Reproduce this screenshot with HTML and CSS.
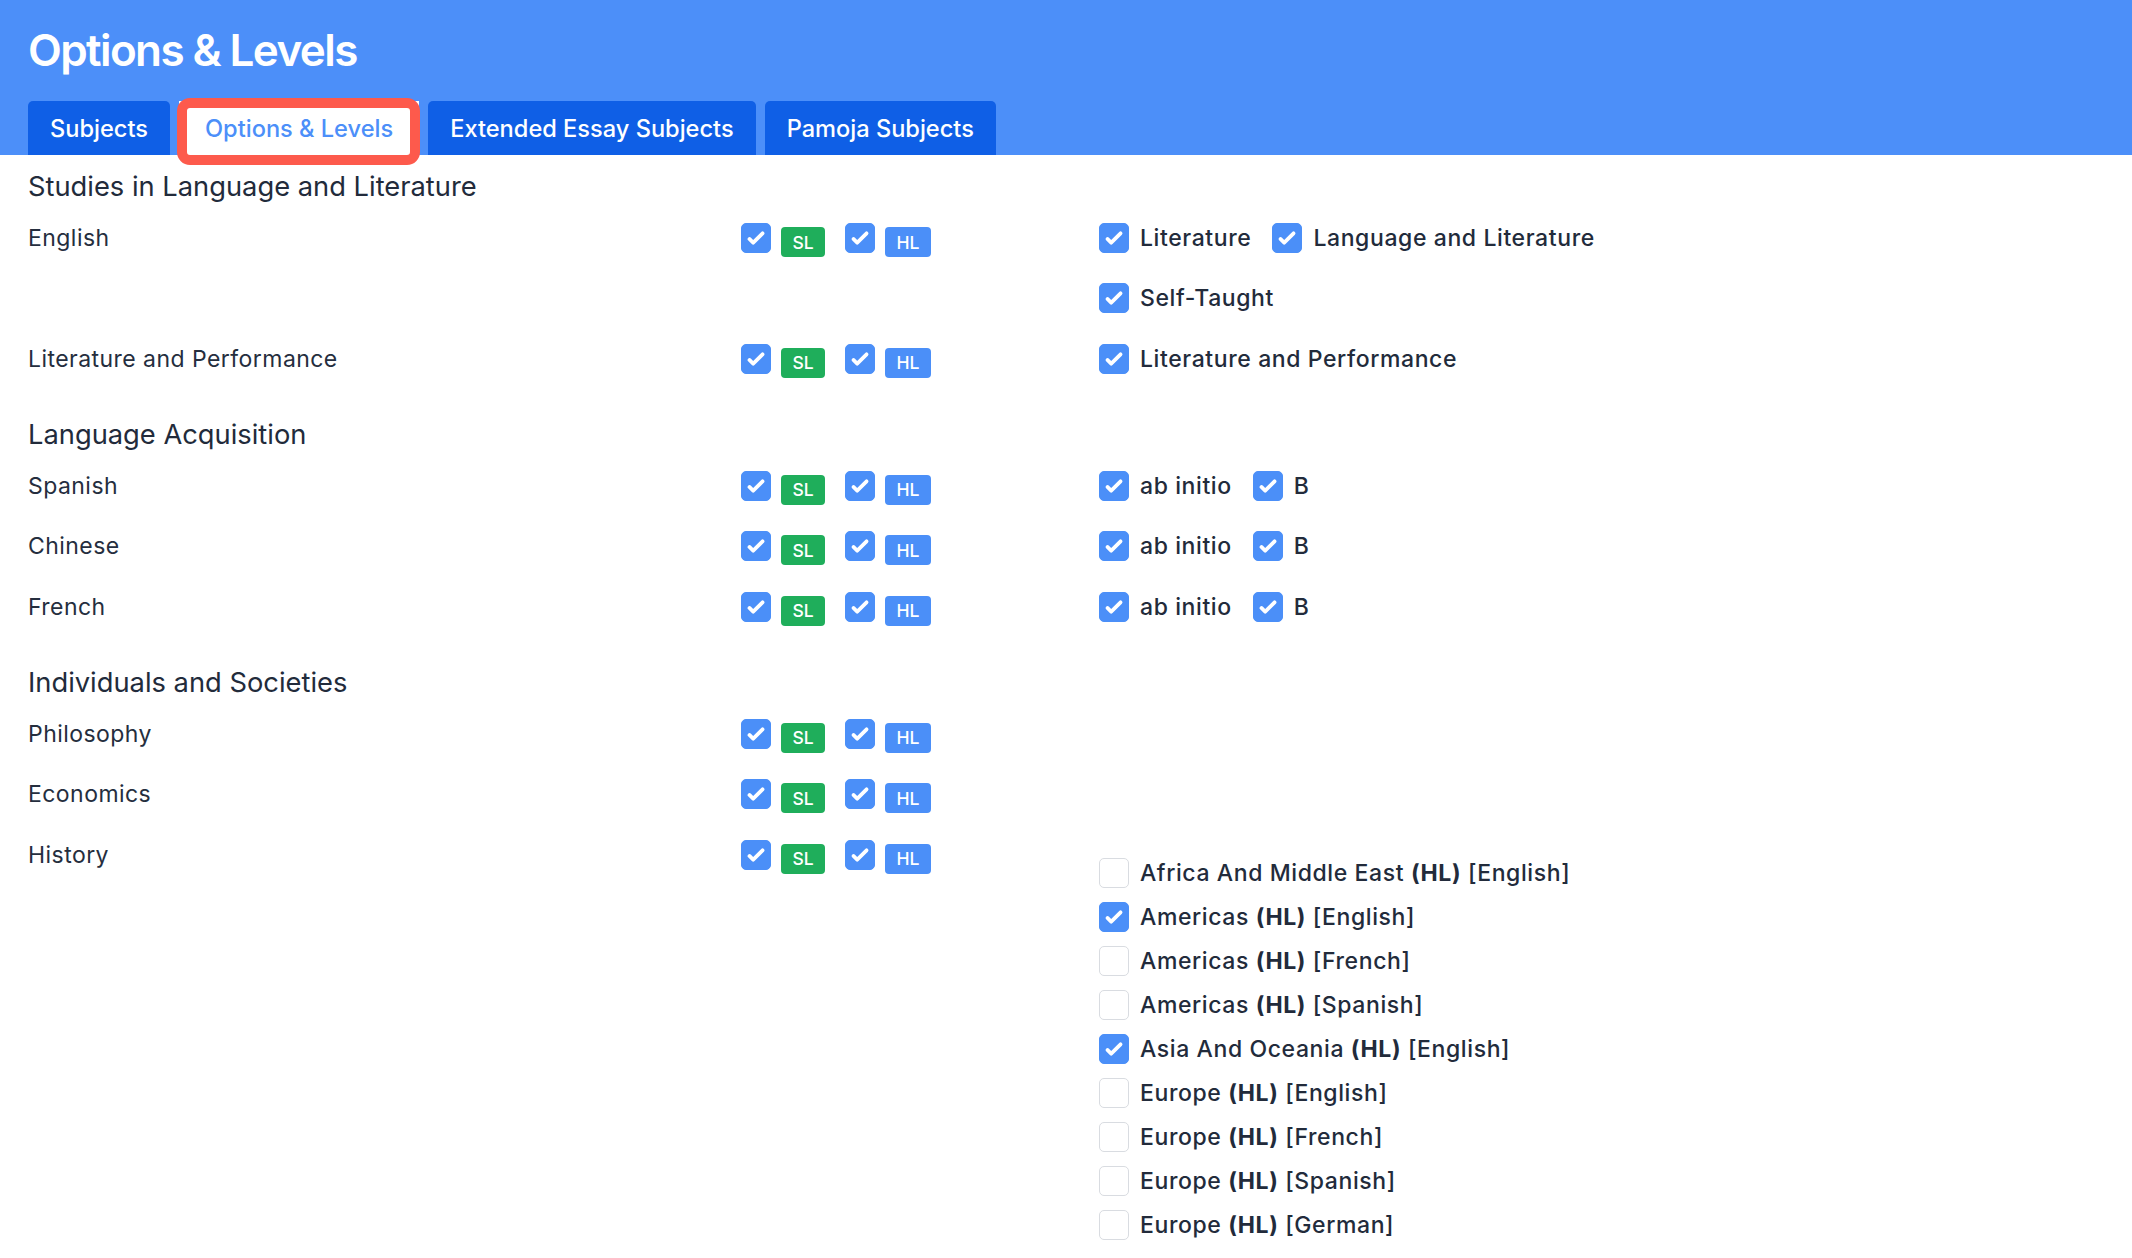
FILE: index.html
```html
<!DOCTYPE html>
<html lang="en">
<head>
<meta charset="utf-8">
<title>Options &amp; Levels</title>
<link rel="stylesheet" href="styles.css">
</head>
<body>
<header class="header">
  <h1 class="title">Options &amp; Levels</h1>
  <nav class="tabs">
    <a class="tab">Subjects</a>
    <a class="tab active">Options &amp; Levels</a>
    <a class="tab">Extended Essay Subjects</a>
    <a class="tab">Pamoja Subjects</a>
  </nav>
</header>

<main class="content">
  <section class="group">
    <h2 class="group-title">Studies in Language and Literature</h2>
    <div class="row">
      <div class="name">English</div>
      <div class="levels">
        <span class="cb on"><svg viewBox="0 0 16 16"><path d="M12.207 4.793a1 1 0 010 1.414l-5 5a1 1 0 01-1.414 0l-2-2a1 1 0 011.414-1.414L6.5 9.086l4.293-4.293a1 1 0 011.414 0z"/></svg></span>
        <span class="badge sl">SL</span>
        <span class="cb on"><svg viewBox="0 0 16 16"><path d="M12.207 4.793a1 1 0 010 1.414l-5 5a1 1 0 01-1.414 0l-2-2a1 1 0 011.414-1.414L6.5 9.086l4.293-4.293a1 1 0 011.414 0z"/></svg></span>
        <span class="badge hl">HL</span>
      </div>
      <div class="options wrap">
        <label class="opt"><span class="cb on"><svg viewBox="0 0 16 16"><path d="M12.207 4.793a1 1 0 010 1.414l-5 5a1 1 0 01-1.414 0l-2-2a1 1 0 011.414-1.414L6.5 9.086l4.293-4.293a1 1 0 011.414 0z"/></svg></span>Literature</label>
        <label class="opt"><span class="cb on"><svg viewBox="0 0 16 16"><path d="M12.207 4.793a1 1 0 010 1.414l-5 5a1 1 0 01-1.414 0l-2-2a1 1 0 011.414-1.414L6.5 9.086l4.293-4.293a1 1 0 011.414 0z"/></svg></span>Language and Literature</label>
        <label class="opt"><span class="cb on"><svg viewBox="0 0 16 16"><path d="M12.207 4.793a1 1 0 010 1.414l-5 5a1 1 0 01-1.414 0l-2-2a1 1 0 011.414-1.414L6.5 9.086l4.293-4.293a1 1 0 011.414 0z"/></svg></span>Self-Taught</label>
      </div>
    </div>
    <div class="row">
      <div class="name">Literature and Performance</div>
      <div class="levels">
        <span class="cb on"><svg viewBox="0 0 16 16"><path d="M12.207 4.793a1 1 0 010 1.414l-5 5a1 1 0 01-1.414 0l-2-2a1 1 0 011.414-1.414L6.5 9.086l4.293-4.293a1 1 0 011.414 0z"/></svg></span>
        <span class="badge sl">SL</span>
        <span class="cb on"><svg viewBox="0 0 16 16"><path d="M12.207 4.793a1 1 0 010 1.414l-5 5a1 1 0 01-1.414 0l-2-2a1 1 0 011.414-1.414L6.5 9.086l4.293-4.293a1 1 0 011.414 0z"/></svg></span>
        <span class="badge hl">HL</span>
      </div>
      <div class="options wrap">
        <label class="opt"><span class="cb on"><svg viewBox="0 0 16 16"><path d="M12.207 4.793a1 1 0 010 1.414l-5 5a1 1 0 01-1.414 0l-2-2a1 1 0 011.414-1.414L6.5 9.086l4.293-4.293a1 1 0 011.414 0z"/></svg></span>Literature and Performance</label>
      </div>
    </div>
  </section>

  <section class="group">
    <h2 class="group-title">Language Acquisition</h2>
    <div class="row">
      <div class="name">Spanish</div>
      <div class="levels">
        <span class="cb on"><svg viewBox="0 0 16 16"><path d="M12.207 4.793a1 1 0 010 1.414l-5 5a1 1 0 01-1.414 0l-2-2a1 1 0 011.414-1.414L6.5 9.086l4.293-4.293a1 1 0 011.414 0z"/></svg></span>
        <span class="badge sl">SL</span>
        <span class="cb on"><svg viewBox="0 0 16 16"><path d="M12.207 4.793a1 1 0 010 1.414l-5 5a1 1 0 01-1.414 0l-2-2a1 1 0 011.414-1.414L6.5 9.086l4.293-4.293a1 1 0 011.414 0z"/></svg></span>
        <span class="badge hl">HL</span>
      </div>
      <div class="options wrap">
        <label class="opt"><span class="cb on"><svg viewBox="0 0 16 16"><path d="M12.207 4.793a1 1 0 010 1.414l-5 5a1 1 0 01-1.414 0l-2-2a1 1 0 011.414-1.414L6.5 9.086l4.293-4.293a1 1 0 011.414 0z"/></svg></span>ab initio</label>
        <label class="opt"><span class="cb on"><svg viewBox="0 0 16 16"><path d="M12.207 4.793a1 1 0 010 1.414l-5 5a1 1 0 01-1.414 0l-2-2a1 1 0 011.414-1.414L6.5 9.086l4.293-4.293a1 1 0 011.414 0z"/></svg></span>B</label>
      </div>
    </div>
    <div class="row">
      <div class="name">Chinese</div>
      <div class="levels">
        <span class="cb on"><svg viewBox="0 0 16 16"><path d="M12.207 4.793a1 1 0 010 1.414l-5 5a1 1 0 01-1.414 0l-2-2a1 1 0 011.414-1.414L6.5 9.086l4.293-4.293a1 1 0 011.414 0z"/></svg></span>
        <span class="badge sl">SL</span>
        <span class="cb on"><svg viewBox="0 0 16 16"><path d="M12.207 4.793a1 1 0 010 1.414l-5 5a1 1 0 01-1.414 0l-2-2a1 1 0 011.414-1.414L6.5 9.086l4.293-4.293a1 1 0 011.414 0z"/></svg></span>
        <span class="badge hl">HL</span>
      </div>
      <div class="options wrap">
        <label class="opt"><span class="cb on"><svg viewBox="0 0 16 16"><path d="M12.207 4.793a1 1 0 010 1.414l-5 5a1 1 0 01-1.414 0l-2-2a1 1 0 011.414-1.414L6.5 9.086l4.293-4.293a1 1 0 011.414 0z"/></svg></span>ab initio</label>
        <label class="opt"><span class="cb on"><svg viewBox="0 0 16 16"><path d="M12.207 4.793a1 1 0 010 1.414l-5 5a1 1 0 01-1.414 0l-2-2a1 1 0 011.414-1.414L6.5 9.086l4.293-4.293a1 1 0 011.414 0z"/></svg></span>B</label>
      </div>
    </div>
    <div class="row">
      <div class="name">French</div>
      <div class="levels">
        <span class="cb on"><svg viewBox="0 0 16 16"><path d="M12.207 4.793a1 1 0 010 1.414l-5 5a1 1 0 01-1.414 0l-2-2a1 1 0 011.414-1.414L6.5 9.086l4.293-4.293a1 1 0 011.414 0z"/></svg></span>
        <span class="badge sl">SL</span>
        <span class="cb on"><svg viewBox="0 0 16 16"><path d="M12.207 4.793a1 1 0 010 1.414l-5 5a1 1 0 01-1.414 0l-2-2a1 1 0 011.414-1.414L6.5 9.086l4.293-4.293a1 1 0 011.414 0z"/></svg></span>
        <span class="badge hl">HL</span>
      </div>
      <div class="options wrap">
        <label class="opt"><span class="cb on"><svg viewBox="0 0 16 16"><path d="M12.207 4.793a1 1 0 010 1.414l-5 5a1 1 0 01-1.414 0l-2-2a1 1 0 011.414-1.414L6.5 9.086l4.293-4.293a1 1 0 011.414 0z"/></svg></span>ab initio</label>
        <label class="opt"><span class="cb on"><svg viewBox="0 0 16 16"><path d="M12.207 4.793a1 1 0 010 1.414l-5 5a1 1 0 01-1.414 0l-2-2a1 1 0 011.414-1.414L6.5 9.086l4.293-4.293a1 1 0 011.414 0z"/></svg></span>B</label>
      </div>
    </div>
  </section>

  <section class="group">
    <h2 class="group-title">Individuals and Societies</h2>
    <div class="row">
      <div class="name">Philosophy</div>
      <div class="levels">
        <span class="cb on"><svg viewBox="0 0 16 16"><path d="M12.207 4.793a1 1 0 010 1.414l-5 5a1 1 0 01-1.414 0l-2-2a1 1 0 011.414-1.414L6.5 9.086l4.293-4.293a1 1 0 011.414 0z"/></svg></span>
        <span class="badge sl">SL</span>
        <span class="cb on"><svg viewBox="0 0 16 16"><path d="M12.207 4.793a1 1 0 010 1.414l-5 5a1 1 0 01-1.414 0l-2-2a1 1 0 011.414-1.414L6.5 9.086l4.293-4.293a1 1 0 011.414 0z"/></svg></span>
        <span class="badge hl">HL</span>
      </div>
      <div class="options"></div>
    </div>
    <div class="row">
      <div class="name">Economics</div>
      <div class="levels">
        <span class="cb on"><svg viewBox="0 0 16 16"><path d="M12.207 4.793a1 1 0 010 1.414l-5 5a1 1 0 01-1.414 0l-2-2a1 1 0 011.414-1.414L6.5 9.086l4.293-4.293a1 1 0 011.414 0z"/></svg></span>
        <span class="badge sl">SL</span>
        <span class="cb on"><svg viewBox="0 0 16 16"><path d="M12.207 4.793a1 1 0 010 1.414l-5 5a1 1 0 01-1.414 0l-2-2a1 1 0 011.414-1.414L6.5 9.086l4.293-4.293a1 1 0 011.414 0z"/></svg></span>
        <span class="badge hl">HL</span>
      </div>
      <div class="options"></div>
    </div>
    <div class="row">
      <div class="name">History</div>
      <div class="levels">
        <span class="cb on"><svg viewBox="0 0 16 16"><path d="M12.207 4.793a1 1 0 010 1.414l-5 5a1 1 0 01-1.414 0l-2-2a1 1 0 011.414-1.414L6.5 9.086l4.293-4.293a1 1 0 011.414 0z"/></svg></span>
        <span class="badge sl">SL</span>
        <span class="cb on"><svg viewBox="0 0 16 16"><path d="M12.207 4.793a1 1 0 010 1.414l-5 5a1 1 0 01-1.414 0l-2-2a1 1 0 011.414-1.414L6.5 9.086l4.293-4.293a1 1 0 011.414 0z"/></svg></span>
        <span class="badge hl">HL</span>
      </div>
      <div class="options list">
        <label class="opt"><span class="cb"></span>Africa And Middle East&nbsp;<b>(HL)</b>&nbsp;[English]</label>
        <label class="opt"><span class="cb on"><svg viewBox="0 0 16 16"><path d="M12.207 4.793a1 1 0 010 1.414l-5 5a1 1 0 01-1.414 0l-2-2a1 1 0 011.414-1.414L6.5 9.086l4.293-4.293a1 1 0 011.414 0z"/></svg></span>Americas&nbsp;<b>(HL)</b>&nbsp;[English]</label>
        <label class="opt"><span class="cb"></span>Americas&nbsp;<b>(HL)</b>&nbsp;[French]</label>
        <label class="opt"><span class="cb"></span>Americas&nbsp;<b>(HL)</b>&nbsp;[Spanish]</label>
        <label class="opt"><span class="cb on"><svg viewBox="0 0 16 16"><path d="M12.207 4.793a1 1 0 010 1.414l-5 5a1 1 0 01-1.414 0l-2-2a1 1 0 011.414-1.414L6.5 9.086l4.293-4.293a1 1 0 011.414 0z"/></svg></span>Asia And Oceania&nbsp;<b>(HL)</b>&nbsp;[English]</label>
        <label class="opt"><span class="cb"></span>Europe&nbsp;<b>(HL)</b>&nbsp;[English]</label>
        <label class="opt"><span class="cb"></span>Europe&nbsp;<b>(HL)</b>&nbsp;[French]</label>
        <label class="opt"><span class="cb"></span>Europe&nbsp;<b>(HL)</b>&nbsp;[Spanish]</label>
        <label class="opt"><span class="cb"></span>Europe&nbsp;<b>(HL)</b>&nbsp;[German]</label>
      </div>
    </div>
  </section>
</main>
</body>
</html>
```

FILE: styles.css
```css
* { box-sizing: border-box; }

body {
  margin: 0;
  background: #ffffff;
  font-family: Inter, "Noto Sans", "Liberation Sans", sans-serif;
  color: #222b3b;
}

.header {
  background: #4c8ff9;
  padding: 23px 28px 0;
}

.title {
  margin: 0;
  font-size: 44px;
  line-height: 54px;
  font-weight: 600;
  color: #ffffff;
  letter-spacing: -1.6px;
}

.tabs {
  display: flex;
  gap: 9px;
  margin-top: 24px;
}

.tab {
  position: relative;
  display: flex;
  align-items: center;
  height: 54px;
  padding: 0 22px;
  background: #0f5fe6;
  color: #ffffff;
  font-size: 23.6px;
  font-weight: 500;
  border-radius: 5px 5px 0 0;
}

.tab.active {
  padding: 0 26px;
  background: #ffffff;
  color: #4c8ff9;
  border-radius: 0;
}

.tab.active::after {
  content: "";
  position: absolute;
  top: -3px;
  left: -2px;
  right: -1px;
  bottom: -10px;
  border: 10px solid #fd5a4c;
  border-radius: 13px;
}

.content {
  padding: 14px 28px 0;
}

.group + .group {
  margin-top: 43px;
}

.group-title {
  margin: 0 0 18px;
  font-size: 27.3px;
  line-height: 36px;
  font-weight: 400;
  color: #222b3b;
}

.row {
  display: grid;
  grid-template-columns: 713px 358px 1fr;
  align-items: start;
  margin-bottom: 30.5px;
}

.name {
  font-size: 23px;
  line-height: 30px;
  letter-spacing: 0.45px;
  color: #252e3e;
}

.levels {
  display: flex;
  align-items: flex-start;
  height: 30px;
}

.cb {
  flex: none;
  display: inline-flex;
  align-items: center;
  justify-content: center;
  width: 30px;
  height: 30px;
  border-radius: 5px;
  border: 1.5px solid #d9dce1;
  background: #ffffff;
}

.cb.on {
  background: #4b8ff8;
  border-color: #4b8ff8;
}

.cb svg {
  width: 30px;
  height: 30px;
  fill: #ffffff;
  flex: none;
}

.badge {
  display: inline-flex;
  align-items: center;
  justify-content: center;
  height: 30px;
  margin-top: 4px;
  margin-left: 10px;
  margin-right: 20px;
  border-radius: 4px;
  color: #ffffff;
  font-size: 17.5px;
  font-weight: 500;
}

.badge.sl {
  width: 44px;
  background: #1fae5b;
}

.badge.hl {
  width: 46px;
  background: #4b8ff8;
}

.options {
  display: flex;
}

.options.wrap {
  flex-wrap: wrap;
  max-width: 560px;
  column-gap: 21px;
  row-gap: 30px;
}

.options.list {
  flex-direction: column;
  gap: 14px;
  padding-top: 18px;
}

.opt {
  display: flex;
  align-items: center;
  height: 30px;
  font-size: 23px;
  font-weight: 500;
  letter-spacing: 0.6px;
  color: #222b3b;
  white-space: nowrap;
}

.opt .cb {
  margin-right: 11px;
}

.opt b {
  font-weight: 700;
}
```
